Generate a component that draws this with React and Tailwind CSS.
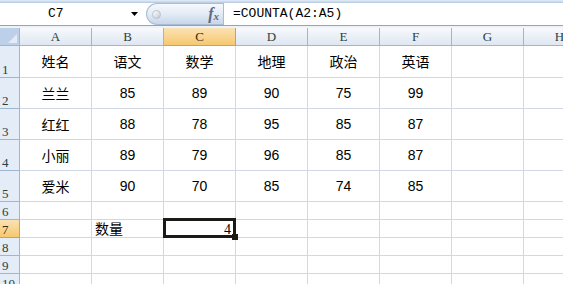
import React from "react";

const columns = ["A", "B", "C", "D", "E", "F", "G", "H"];

const rows = [
    ["姓名", "语文", "数学", "地理", "政治", "英语"],
    ["兰兰", "85", "89", "90", "75", "99"],
    ["红红", "88", "78", "95", "85", "87"],
    ["小丽", "89", "79", "96", "85", "87"],
    ["爱米", "90", "70", "85", "74", "85"],
];

const rowHeights = ["h-[32px]", "h-[31px]", "h-[31px]", "h-[31px]", "h-[31px]", "h-[18px]", "h-[18px]", "h-[18px]", "h-[18px]", "h-[18px]"];

const cjk = { fontFamily: '"Noto Sans CJK SC", "Liberation Sans", sans-serif' };
const serif = { fontFamily: '"Liberation Serif", "Noto Sans CJK SC", serif' };
const mono = { fontFamily: '"Liberation Mono", "Noto Sans CJK SC", monospace' };

function FormulaBar() {
    return (
        <div className="shrink-0">
            <div className="h-[3px] bg-gradient-to-b from-[#e3eef9] to-[#b5c9e2]" />
            <div className="flex h-[22px] bg-white">
                <div className="flex w-[146px] shrink-0 items-center">
                    <span className="ml-[48px] text-[13px] text-black" style={mono}>
                        C7
                    </span>
                    <svg className="ml-auto mr-[8px]" width="7" height="4" viewBox="0 0 7 4">
                        <path d="M0 0H7L3.5 4Z" fill="#000" />
                    </svg>
                </div>
                <div className="flex w-[77px] shrink-0 items-center rounded-l-full border border-r-0 border-[#a9bcd5] bg-gradient-to-b from-[#f6f9fd] via-[#e3ebf5] to-[#c8d6e9]">
                    <span className="ml-[5px] h-[9px] w-[9px] rounded-full border border-[#b7c2d0] bg-gradient-to-br from-[#ffffff] to-[#c3cad4]" />
                    <span className="ml-auto mr-[4px] flex items-end font-bold italic text-[#5d6b80]" style={serif}>
                        <span className="text-[16px] leading-none">f</span>
                        <span className="text-[11px] leading-none">x</span>
                    </span>
                </div>
                <div className="w-px bg-[#a9bcd5]" />
                <div className="flex items-center pl-[9px] text-[13px] text-black" style={mono}>
                    =COUNTA(A2:A5)
                </div>
            </div>
            <div className="h-px bg-[#8ea4c1]" />
            <div className="h-[2px] bg-[#eef3f9]" />
        </div>
    );
}

function HeaderRow() {
    return (
        <div className="flex h-[18px] shrink-0">
            <div className="relative w-[20px] shrink-0 border-r border-b border-[#9eb6ce] bg-[#bcd0ea]">
                <svg className="absolute bottom-[2px] right-[2px]" width="9" height="9" viewBox="0 0 9 9">
                    <path d="M9 0V9H0Z" fill="#e3ebf6" />
                </svg>
            </div>
            {columns.map((col) => (
                <div
                    key={col}
                    className={`flex w-[72px] shrink-0 items-center justify-center border-r border-b text-[13px] ${
                        col === "C"
                            ? "border-[#f29536] bg-gradient-to-b from-[#fbe2b4] to-[#f6c86d] text-[#3a2c14]"
                            : "border-[#9eb6ce] bg-gradient-to-b from-[#f7f9fc] to-[#dfe7f2] text-[#27413e]"
                    }`}
                    style={serif}
                >
                    {col}
                </div>
            ))}
        </div>
    );
}

function Cell({ children, className = "", style }) {
    return (
        <div
            className={`relative flex w-[72px] shrink-0 items-center border-r border-b border-[#d0d7e5] ${className}`}
            style={style}
        >
            {children}
        </div>
    );
}

function SheetRow({ index }) {
    const number = index + 1;
    const data = rows[index];
    const active = number === 7;

    return (
        <div className={`flex shrink-0 ${rowHeights[index]}`}>
            <div
                className={`flex w-[20px] shrink-0 items-end border-r border-b pl-[2px] text-[13px] leading-[15px] ${
                    active
                        ? "border-[#f29536] bg-gradient-to-b from-[#fbe2b4] to-[#f6c86d] text-[#3a2c14]"
                        : "border-[#9eb6ce] bg-[#e4ecf7] text-[#27413e]"
                }`}
                style={serif}
            >
                {number}
            </div>
            {columns.map((col, c) => {
                if (data) {
                    const value = data[c];
                    const isText = value && !/^\d+$/.test(value);
                    return (
                        <Cell
                            key={col}
                            className="justify-center text-[14px] text-black"
                            style={isText ? cjk : { fontFamily: '"Liberation Sans", sans-serif' }}
                        >
                            {value}
                        </Cell>
                    );
                }
                if (active && col === "B") {
                    return (
                        <Cell key={col} className="pl-[3px] text-[14px] text-black" style={cjk}>
                            数量
                        </Cell>
                    );
                }
                if (active && col === "C") {
                    return (
                        <Cell key={col} className="z-10 justify-end pr-[4px] text-[14px] text-black" style={serif}>
                            <span className="relative top-[1px]">4</span>
                            <div className="pointer-events-none absolute -left-[1px] -top-[2px] -right-[1px] -bottom-[1px] border-[3px] border-[#1c1a14]" />
                            <div className="absolute -bottom-[3px] -right-[3px] h-[6px] w-[6px] bg-[#1c1a14]" />
                        </Cell>
                    );
                }
                return <Cell key={col} />;
            })}
        </div>
    );
}

export default function App() {
    return (
        <div className="flex h-[284px] w-[563px] flex-col overflow-hidden bg-white">
            <FormulaBar />
            <HeaderRow />
            {rowHeights.map((_, index) => (
                <SheetRow key={index} index={index} />
            ))}
        </div>
    );
}
